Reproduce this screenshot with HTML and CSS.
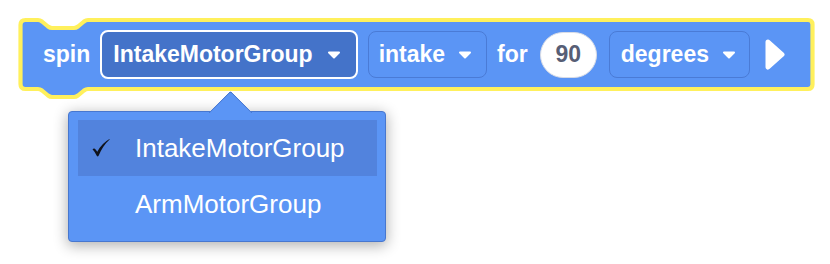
FILE: index.html
```html
<!DOCTYPE html>
<html>
<head>
<meta charset="utf-8">
<link rel="stylesheet" href="styles.css">
</head>
<body>
<div class="stage">
  <div class="block">
    <svg class="block-shape" width="830" height="110" viewBox="0 0 830 110">
      <path d="M 20.5 25 Q 20.5 20 25.5 20 L 38 20 Q 40 20 42 21.5 L 48 26.5 Q 50 28 52 28 L 74 28 Q 76 28 78 26.5 L 84 21.5 Q 86 20 88 20 L 808 20 Q 812.5 20 812.5 24.5 L 812.5 84.5 Q 812.5 89 808 89 L 88 89 Q 86 89 84 90.5 L 78 95.5 Q 76 97 74 97 L 52 97 Q 50 97 48 95.5 L 42 90.5 Q 40 89 38 89 L 25.5 89 Q 20.5 89 20.5 84 Z" fill="#5b95f5" stroke="#fff05c" stroke-width="4.2" stroke-linejoin="round"/>
    </svg>
    <div class="row">
      <span class="label">spin</span>
      <div class="field field-active">
        <span>IntakeMotorGroup</span>
        <svg class="caret" width="14" height="8" viewBox="0 0 14 8"><path d="M2 1.5 L12 1.5 L7 6.5 Z" fill="#fff" stroke="#fff" stroke-width="2" stroke-linejoin="round"/></svg>
      </div>
      <div class="field field-intake">
        <span>intake</span>
        <svg class="caret" width="14" height="8" viewBox="0 0 14 8"><path d="M2 1.5 L12 1.5 L7 6.5 Z" fill="#fff" stroke="#fff" stroke-width="2" stroke-linejoin="round"/></svg>
      </div>
      <span class="label">for</span>
      <div class="number">90</div>
      <div class="field field-degrees">
        <span>degrees</span>
        <svg class="caret" width="14" height="8" viewBox="0 0 14 8"><path d="M2 1.5 L12 1.5 L7 6.5 Z" fill="#fff" stroke="#fff" stroke-width="2" stroke-linejoin="round"/></svg>
      </div>
      <svg class="play" width="20" height="31" viewBox="0 0 20 31"><path d="M3 3 L17 15.5 L3 28 Z" fill="#fff" stroke="#fff" stroke-width="5" stroke-linejoin="round"/></svg>
    </div>
  </div>
  <div class="menu">
    <div class="menu-arrow"><div class="menu-arrow-sq"></div></div>
    <div class="menu-item menu-item-selected">
      <svg class="check" width="20" height="20" viewBox="0 0 20 20"><path d="M1.5 11.2 Q3.2 9.6 4.6 11.4 L6.3 13.8 Q10.5 5.5 18.5 1 Q19 1 18.6 1.6 Q12 7.5 7.6 17.8 Q6.8 19 5.9 18.1 Q4.2 14 1.5 11.2 Z" fill="#10131c"/></svg>
      IntakeMotorGroup
    </div>
    <div class="menu-item">ArmMotorGroup</div>
  </div>
</div>
</body>
</html>
```
FILE: styles.css
```css
html, body {
  margin: 0;
  padding: 0;
  background: #ffffff;
}
.stage {
  position: relative;
  width: 830px;
  height: 264px;
  overflow: hidden;
  font-family: "Liberation Sans", Helvetica, Arial, sans-serif;
}
.block {
  position: relative;
  width: 830px;
  height: 110px;
}
.block-shape {
  position: absolute;
  left: 0;
  top: 0;
}
.row {
  position: relative;
  display: flex;
  align-items: center;
  gap: 10px;
  padding: 30px 0 0 43px;
  height: 49px;
}
.label {
  color: #fff;
  font-weight: bold;
  font-size: 23px;
  line-height: 1;
}
.field {
  box-sizing: border-box;
  display: flex;
  align-items: center;
  color: #fff;
  font-weight: bold;
  font-size: 23px;
  border-radius: 8px;
}
.field .caret {
  display: block;
}
.field-active {
  height: 49px;
  background: #4473c9;
  border: 2px solid #ffffff;
  padding: 0 15px 0 11px;
}
.field-active .caret {
  margin-left: 14px;
}
.field-intake {
  height: 47px;
  border: 1px solid #4a7bd6;
  padding: 0 14px 0 10px;
}
.field-intake .caret {
  margin-left: 13px;
}
.field-degrees {
  margin-left: 2px;
  height: 47px;
  border: 1px solid #4a7bd6;
  padding: 0 13px 0 11px;
}
.field-degrees .caret {
  margin-left: 13px;
}
.number {
  box-sizing: border-box;
  margin-left: 2px;
  width: 57px;
  height: 46px;
  border-radius: 23px;
  background: #ffffff;
  border: 1px solid #d8dce6;
  color: #575e75;
  font-weight: bold;
  font-size: 23px;
  display: flex;
  align-items: center;
  justify-content: center;
}
.play {
  display: block;
  margin-left: 5px;
}
.menu {
  position: absolute;
  left: 68px;
  top: 111px;
  width: 318px;
  height: 131px;
  box-sizing: border-box;
  background: #5b95f5;
  border: 1px solid #4777cf;
  border-radius: 4px;
  padding: 8px 8px 9px 9px;
  box-shadow: 0 3px 14px 1px rgba(0, 0, 0, 0.3);
}
.menu-arrow {
  position: absolute;
  left: 139px;
  top: -22px;
  width: 46px;
  height: 23px;
  overflow: hidden;
}
.menu-arrow-sq {
  position: absolute;
  left: 7px;
  top: 7px;
  width: 31px;
  height: 31px;
  box-sizing: border-box;
  background: #5b95f5;
  border-top: 1px solid #4777cf;
  border-left: 1px solid #4777cf;
  border-top-left-radius: 3px;
  transform: rotate(45deg);
}
.menu-item {
  position: relative;
  height: 56px;
  line-height: 56px;
  padding-left: 57px;
  color: #ffffff;
  font-size: 26px;
}
.menu-item-selected {
  background: #5283dd;
}
.check {
  position: absolute;
  left: 13px;
  top: 18px;
}
```
